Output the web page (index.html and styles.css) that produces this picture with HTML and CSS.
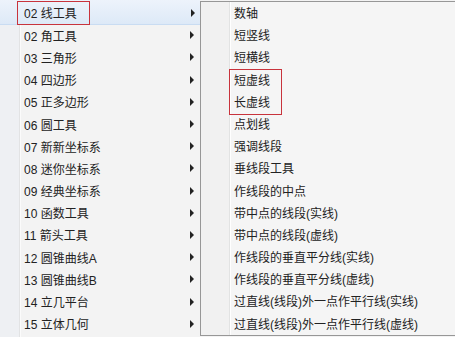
FILE: index.html
```html
<!DOCTYPE html>
<html>
<head>
<meta charset="utf-8">
<link rel="stylesheet" href="styles.css">
</head>
<body>
<div class="stage">
  <div class="menu">
    <div class="item active"><span class="label mark">02 线工具</span><span class="arrow"></span></div>
    <div class="item"><span class="label">02 角工具</span><span class="arrow"></span></div>
    <div class="item"><span class="label">03 三角形</span><span class="arrow"></span></div>
    <div class="item"><span class="label">04 四边形</span><span class="arrow"></span></div>
    <div class="item"><span class="label">05 正多边形</span><span class="arrow"></span></div>
    <div class="item"><span class="label">06 圆工具</span><span class="arrow"></span></div>
    <div class="item"><span class="label">07 新新坐标系</span><span class="arrow"></span></div>
    <div class="item"><span class="label">08 迷你坐标系</span><span class="arrow"></span></div>
    <div class="item"><span class="label">09 经典坐标系</span><span class="arrow"></span></div>
    <div class="item"><span class="label">10 函数工具</span><span class="arrow"></span></div>
    <div class="item"><span class="label">11 箭头工具</span><span class="arrow"></span></div>
    <div class="item"><span class="label">12 圆锥曲线A</span><span class="arrow"></span></div>
    <div class="item"><span class="label">13 圆锥曲线B</span><span class="arrow"></span></div>
    <div class="item"><span class="label">14 立几平台</span><span class="arrow"></span></div>
    <div class="item"><span class="label">15 立体几何</span><span class="arrow"></span></div>
  </div>
  <div class="submenu">
    <div class="sub">数轴</div>
    <div class="sub">短竖线</div>
    <div class="sub">短横线</div>
    <div class="group">
      <div class="sub">短虚线</div>
      <div class="sub">长虚线</div>
    </div>
    <div class="sub">点划线</div>
    <div class="sub">强调线段</div>
    <div class="sub">垂线段工具</div>
    <div class="sub">作线段的中点</div>
    <div class="sub">带中点的线段(实线)</div>
    <div class="sub">带中点的线段(虚线)</div>
    <div class="sub">作线段的垂直平分线(实线)</div>
    <div class="sub">作线段的垂直平分线(虚线)</div>
    <div class="sub">过直线(线段)外一点作平行线(实线)</div>
    <div class="sub">过直线(线段)外一点作平行线(虚线)</div>
  </div>
</div>
</body>
</html>
```
FILE: styles.css
```css
html, body {
  margin: 0;
  padding: 0;
}
body {
  width: 455px;
  height: 337px;
  overflow: hidden;
  font-family: "Liberation Sans", "Noto Sans CJK SC", sans-serif;
  font-size: 12px;
  color: #222222;
}
.stage {
  position: relative;
  width: 455px;
  height: 337px;
  background: linear-gradient(to right, #eef0f3 0 19px, #e2e3e4 19px 20px, #fbfbfb 20px 21px, #f3f3f3 21px);
}
.menu {
  padding-top: 2px;
  display: flex;
  flex-direction: column;
}
.item {
  height: 22.2px;
  display: flex;
  align-items: center;
  padding-left: 24px;
  width: 176px;
  position: relative;
}
.item.active {
  background: linear-gradient(to bottom, #edf3fb, #dde9f7);
  border-bottom: 1px solid #c9dcf2;
  margin-top: -2px;
  padding-top: 1px;
  box-sizing: border-box;
  width: 200px;
  height: 25.2px;
  margin-bottom: -1px;
}
.label {
  flex: 1;
  white-space: nowrap;
}
.mark {
  position: relative;
}
.mark::before {
  content: "";
  position: absolute;
  left: -7px;
  top: -3px;
  width: 71px;
  height: 22px;
  border: 1px solid #c8333c;
}
.arrow {
  width: 0;
  height: 0;
  border-top: 4px solid transparent;
  border-bottom: 4px solid transparent;
  border-left: 4px solid #222;
  margin-right: 6px;
}
.item.active .arrow {
  position: absolute;
  left: 191px;
}
.submenu {
  position: absolute;
  left: 200px;
  top: 1px;
  width: 270px;
  height: 332px;
  border: 1px solid #979797;
  padding-top: 1px;
  box-sizing: content-box;
  background: linear-gradient(to right, #f1f1f1 0 28px, #e2e3e3 28px 29px, #ffffff 29px 30px, #f5f5f5 30px);
}
.sub {
  height: 22.2px;
  line-height: 22.2px;
  padding-left: 33px;
  white-space: nowrap;
}
.group {
  position: relative;
}
.group::before {
  content: "";
  position: absolute;
  left: 28px;
  top: -1px;
  width: 51px;
  height: 44px;
  border: 1px solid #c8333c;
}
```
